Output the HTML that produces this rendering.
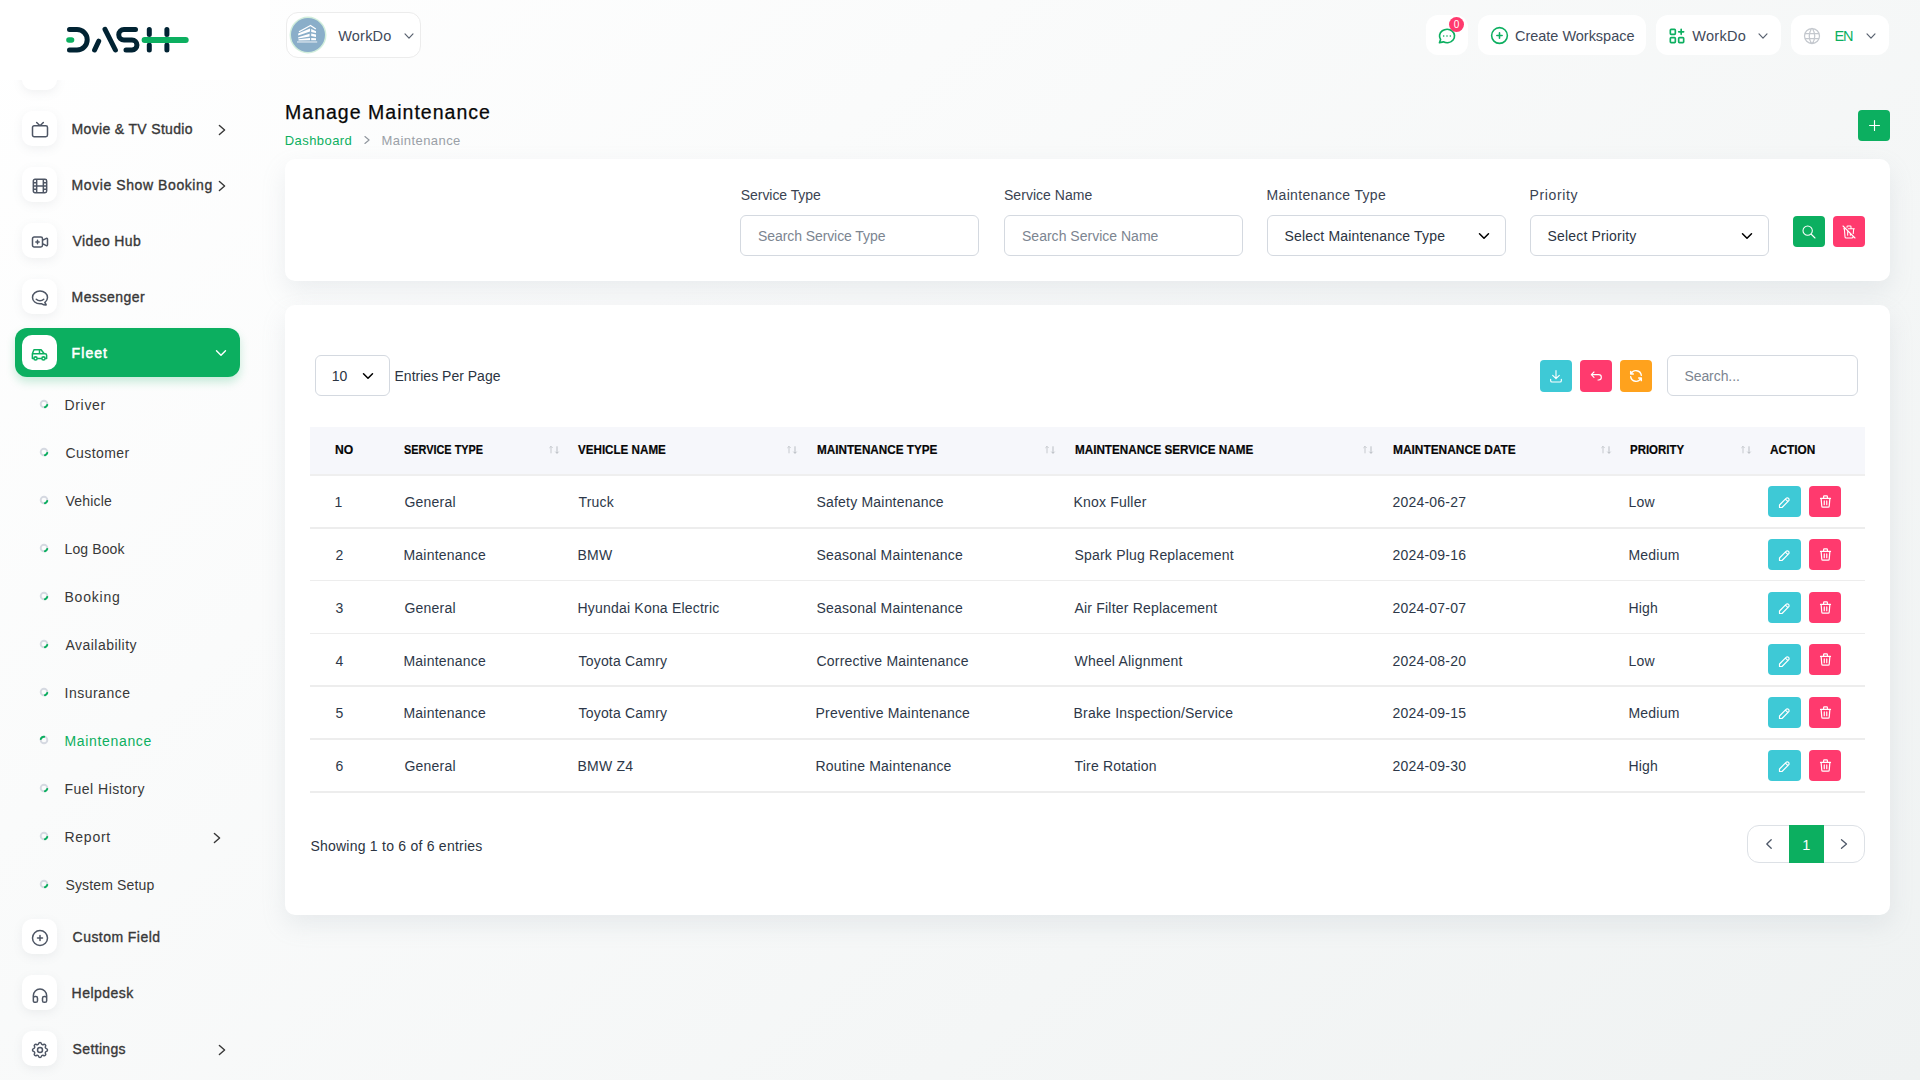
<!DOCTYPE html>
<html><head><meta charset="utf-8"><title>Manage Maintenance</title>
<style>
html,body{margin:0;padding:0;width:1920px;height:1080px;overflow:hidden}
body{position:relative;font-family:"Liberation Sans", sans-serif;background:linear-gradient(140deg,#ffffff 0%,#eff2f2 100%)}
.t{position:absolute;white-space:nowrap;line-height:1}
.b{position:absolute}
.ib{border-radius:10px;background:#fff;box-shadow:0 3px 10px rgba(120,130,140,0.10)}
</style></head><body>
<div class="b ib" style="left:22px;top:55.0px;width:35px;height:35px"></div>
<div class="b ib" style="left:22px;top:111.0px;width:35px;height:35px"></div>
<svg class="b" style="left:29.5px;top:120.3px" width="20" height="20" viewBox="0 0 24 24" fill="none" stroke="#4e5665" stroke-width="1.8" stroke-linecap="round" stroke-linejoin="round"><path d="M3 9a2 2 0 0 1 2 -2h14a2 2 0 0 1 2 2v9a2 2 0 0 1 -2 2h-14a2 2 0 0 1 -2 -2z M16 3l-4 4l-4 -4"/></svg>
<div class="t" style="left:71.60px;top:121.90px;font-size:14px;font-weight:400;color:#383838;letter-spacing:0.331px;-webkit-text-stroke:0.35px currentColor;">Movie &amp; TV Studio</div>
<svg class="b" style="left:213.8px;top:122.0px;" width="16" height="16" viewBox="0 0 16 16" fill="none"><path d="M5.4 3.4000000000000004 L10.6 8 L5.4 12.6" stroke="#383838" stroke-width="1.4" stroke-linecap="round" stroke-linejoin="round"/></svg>
<div class="b ib" style="left:22px;top:167.0px;width:35px;height:35px"></div>
<svg class="b" style="left:29.5px;top:176.3px" width="20" height="20" viewBox="0 0 24 24" fill="none" stroke="#4e5665" stroke-width="1.8" stroke-linecap="round" stroke-linejoin="round"><path d="M4 6a2 2 0 0 1 2 -2h12a2 2 0 0 1 2 2v12a2 2 0 0 1 -2 2h-12a2 2 0 0 1 -2 -2z M8 4l0 16 M16 4l0 16 M4 8l4 0 M4 16l4 0 M4 12l16 0 M16 8l4 0 M16 16l4 0"/></svg>
<div class="t" style="left:71.60px;top:177.90px;font-size:14px;font-weight:400;color:#383838;letter-spacing:0.579px;-webkit-text-stroke:0.35px currentColor;">Movie Show Booking</div>
<svg class="b" style="left:213.8px;top:178.0px;" width="16" height="16" viewBox="0 0 16 16" fill="none"><path d="M5.4 3.4000000000000004 L10.6 8 L5.4 12.6" stroke="#383838" stroke-width="1.4" stroke-linecap="round" stroke-linejoin="round"/></svg>
<div class="b ib" style="left:22px;top:223.0px;width:35px;height:35px"></div>
<svg class="b" style="left:29.5px;top:232.3px" width="20" height="20" viewBox="0 0 24 24" fill="none" stroke="#4e5665" stroke-width="1.8" stroke-linecap="round" stroke-linejoin="round"><path d="M15 10l4.553 -2.276a1 1 0 0 1 1.447 .894v6.764a1 1 0 0 1 -1.447 .894l-4.553 -2.276v-4z M3 8a2 2 0 0 1 2 -2h8a2 2 0 0 1 2 2v8a2 2 0 0 1 -2 2h-8a2 2 0 0 1 -2 -2z M7 12l4 0 M9 10l0 4"/></svg>
<div class="t" style="left:72.60px;top:233.90px;font-size:14px;font-weight:400;color:#383838;letter-spacing:0.383px;-webkit-text-stroke:0.35px currentColor;">Video Hub</div>
<div class="b ib" style="left:22px;top:279.0px;width:35px;height:35px"></div>
<svg class="b" style="left:29.5px;top:288.3px" width="20" height="20" viewBox="0 0 24 24" fill="none" stroke="#4e5665" stroke-width="1.8" stroke-linecap="round" stroke-linejoin="round"><path d="M17.802 17.292s.077 -.055 .2 -.149c1.843 -1.425 3 -3.49 3 -5.789c0 -4.286 -4.03 -7.764 -9 -7.764c-4.97 0 -9 3.478 -9 7.764c0 4.288 4.03 7.646 9 7.646c.424 0 1.12 -.028 2.088 -.084c1.262 .82 3.104 1.493 4.716 1.493c.499 0 .734 -.41 .414 -.828c-.486 -.596 -1.156 -1.551 -1.416 -2.29z M7.5 13.5c2.5 2.5 6.5 2.5 9 0"/></svg>
<div class="t" style="left:71.60px;top:289.90px;font-size:14px;font-weight:400;color:#383838;letter-spacing:0.463px;-webkit-text-stroke:0.35px currentColor;">Messenger</div>
<div class="b" style="left:15px;top:328px;width:225px;height:49px;border-radius:12px;background:#0CAF60;box-shadow:0 5px 10px rgba(12,175,96,0.22)"></div>
<div class="b" style="left:22px;top:335px;width:35px;height:35px;border-radius:10px;background:#fff"></div>
<svg class="b" style="left:30.2px;top:344.6px" width="19" height="19" viewBox="0 0 24 24" fill="none" stroke="#0CAF60" stroke-width="1.9" stroke-linecap="round" stroke-linejoin="round"><path d="M5 17a2 2 0 1 0 4 0a2 2 0 1 0 -4 0 M15 17a2 2 0 1 0 4 0a2 2 0 1 0 -4 0 M5 17h-2v-6l2 -5h9l4 5h1a2 2 0 0 1 2 2v4h-2m-4 0h-6m-6 -6h15m-6 0v-5"/></svg>
<div class="t" style="left:71.60px;top:345.90px;font-size:14px;font-weight:400;color:#fff;letter-spacing:1.066px;-webkit-text-stroke:0.55px currentColor;">Fleet</div>
<svg class="b" style="left:212.5px;top:345px;" width="16" height="16" viewBox="0 0 16 16" fill="none"><path d="M3.5 5.7 L8 10.3 L12.5 5.7" stroke="#fff" stroke-width="1.4" stroke-linecap="round" stroke-linejoin="round"/></svg>
<svg class="b" style="left:38.2px;top:398px;" width="12" height="12" viewBox="0 0 12 12" fill="none"><circle cx="6" cy="6" r="3.3" stroke="#d5d9e1" stroke-width="1.9"/><path d="M9.2 7 A3.3 3.3 0 0 1 7 9.2" stroke="#0CAF60" stroke-width="2.1" stroke-linecap="round"/></svg>
<div class="t" style="left:64.50px;top:397.95px;font-size:14px;font-weight:400;color:#383838;letter-spacing:0.666px;">Driver</div>
<svg class="b" style="left:38.2px;top:446px;" width="12" height="12" viewBox="0 0 12 12" fill="none"><circle cx="6" cy="6" r="3.3" stroke="#d5d9e1" stroke-width="1.9"/><path d="M9.2 7 A3.3 3.3 0 0 1 7 9.2" stroke="#0CAF60" stroke-width="2.1" stroke-linecap="round"/></svg>
<div class="t" style="left:65.50px;top:445.95px;font-size:14px;font-weight:400;color:#383838;letter-spacing:0.426px;">Customer</div>
<svg class="b" style="left:38.2px;top:494px;" width="12" height="12" viewBox="0 0 12 12" fill="none"><circle cx="6" cy="6" r="3.3" stroke="#d5d9e1" stroke-width="1.9"/><path d="M9.2 7 A3.3 3.3 0 0 1 7 9.2" stroke="#0CAF60" stroke-width="2.1" stroke-linecap="round"/></svg>
<div class="t" style="left:65.50px;top:493.95px;font-size:14px;font-weight:400;color:#383838;letter-spacing:0.190px;">Vehicle</div>
<svg class="b" style="left:38.2px;top:542px;" width="12" height="12" viewBox="0 0 12 12" fill="none"><circle cx="6" cy="6" r="3.3" stroke="#d5d9e1" stroke-width="1.9"/><path d="M9.2 7 A3.3 3.3 0 0 1 7 9.2" stroke="#0CAF60" stroke-width="2.1" stroke-linecap="round"/></svg>
<div class="t" style="left:64.50px;top:541.95px;font-size:14px;font-weight:400;color:#383838;letter-spacing:0.120px;">Log Book</div>
<svg class="b" style="left:38.2px;top:590px;" width="12" height="12" viewBox="0 0 12 12" fill="none"><circle cx="6" cy="6" r="3.3" stroke="#d5d9e1" stroke-width="1.9"/><path d="M9.2 7 A3.3 3.3 0 0 1 7 9.2" stroke="#0CAF60" stroke-width="2.1" stroke-linecap="round"/></svg>
<div class="t" style="left:64.50px;top:589.95px;font-size:14px;font-weight:400;color:#383838;letter-spacing:0.782px;">Booking</div>
<svg class="b" style="left:38.2px;top:638px;" width="12" height="12" viewBox="0 0 12 12" fill="none"><circle cx="6" cy="6" r="3.3" stroke="#d5d9e1" stroke-width="1.9"/><path d="M9.2 7 A3.3 3.3 0 0 1 7 9.2" stroke="#0CAF60" stroke-width="2.1" stroke-linecap="round"/></svg>
<div class="t" style="left:65.50px;top:637.95px;font-size:14px;font-weight:400;color:#383838;letter-spacing:0.465px;">Availability</div>
<svg class="b" style="left:38.2px;top:686px;" width="12" height="12" viewBox="0 0 12 12" fill="none"><circle cx="6" cy="6" r="3.3" stroke="#d5d9e1" stroke-width="1.9"/><path d="M9.2 7 A3.3 3.3 0 0 1 7 9.2" stroke="#0CAF60" stroke-width="2.1" stroke-linecap="round"/></svg>
<div class="t" style="left:64.50px;top:685.95px;font-size:14px;font-weight:400;color:#383838;letter-spacing:0.500px;">Insurance</div>
<svg class="b" style="left:38.2px;top:734px;" width="12" height="12" viewBox="0 0 12 12" fill="none"><circle cx="6" cy="6" r="3.3" stroke="#d5d9e1" stroke-width="1.9"/><path d="M6.2 2.7 A3.3 3.3 0 0 0 2.8 5" stroke="#0CAF60" stroke-width="2" stroke-linecap="round"/></svg>
<div class="t" style="left:64.50px;top:733.95px;font-size:14px;font-weight:400;color:#0CAF60;letter-spacing:0.662px;">Maintenance</div>
<svg class="b" style="left:38.2px;top:782px;" width="12" height="12" viewBox="0 0 12 12" fill="none"><circle cx="6" cy="6" r="3.3" stroke="#d5d9e1" stroke-width="1.9"/><path d="M9.2 7 A3.3 3.3 0 0 1 7 9.2" stroke="#0CAF60" stroke-width="2.1" stroke-linecap="round"/></svg>
<div class="t" style="left:64.50px;top:781.95px;font-size:14px;font-weight:400;color:#383838;letter-spacing:0.483px;">Fuel History</div>
<svg class="b" style="left:38.2px;top:830px;" width="12" height="12" viewBox="0 0 12 12" fill="none"><circle cx="6" cy="6" r="3.3" stroke="#d5d9e1" stroke-width="1.9"/><path d="M9.2 7 A3.3 3.3 0 0 1 7 9.2" stroke="#0CAF60" stroke-width="2.1" stroke-linecap="round"/></svg>
<div class="t" style="left:64.50px;top:829.95px;font-size:14px;font-weight:400;color:#383838;letter-spacing:0.734px;">Report</div>
<svg class="b" style="left:38.2px;top:878px;" width="12" height="12" viewBox="0 0 12 12" fill="none"><circle cx="6" cy="6" r="3.3" stroke="#d5d9e1" stroke-width="1.9"/><path d="M9.2 7 A3.3 3.3 0 0 1 7 9.2" stroke="#0CAF60" stroke-width="2.1" stroke-linecap="round"/></svg>
<div class="t" style="left:65.50px;top:877.95px;font-size:14px;font-weight:400;color:#383838;letter-spacing:0.140px;">System Setup</div>
<svg class="b" style="left:208.8px;top:829.5px;" width="16" height="16" viewBox="0 0 16 16" fill="none"><path d="M5.4 3.4000000000000004 L10.6 8 L5.4 12.6" stroke="#383838" stroke-width="1.4" stroke-linecap="round" stroke-linejoin="round"/></svg>
<div class="b ib" style="left:22px;top:919.0px;width:35px;height:35px"></div>
<svg class="b" style="left:29.5px;top:928.3px" width="20" height="20" viewBox="0 0 24 24" fill="none" stroke="#4e5665" stroke-width="1.8" stroke-linecap="round" stroke-linejoin="round"><path d="M3 12a9 9 0 1 0 18 0a9 9 0 0 0 -18 0 M9 12h6 M12 9v6"/></svg>
<div class="t" style="left:72.60px;top:929.90px;font-size:14px;font-weight:400;color:#383838;letter-spacing:0.447px;-webkit-text-stroke:0.35px currentColor;">Custom Field</div>
<div class="b ib" style="left:22px;top:975.0px;width:35px;height:35px"></div>
<svg class="b" style="left:29.5px;top:984.3px" width="20" height="20" viewBox="0 0 24 24" fill="none" stroke="#4e5665" stroke-width="1.8" stroke-linecap="round" stroke-linejoin="round"><path d="M4 17a2 2 0 0 1 2 -2h1a2 2 0 0 1 2 2v3a2 2 0 0 1 -2 2h-1a2 2 0 0 1 -2 -2z M15 17a2 2 0 0 1 2 -2h1a2 2 0 0 1 2 2v3a2 2 0 0 1 -2 2h-1a2 2 0 0 1 -2 -2z M4 17v-3a8 8 0 0 1 16 0v3"/></svg>
<div class="t" style="left:71.60px;top:985.90px;font-size:14px;font-weight:400;color:#383838;letter-spacing:0.484px;-webkit-text-stroke:0.35px currentColor;">Helpdesk</div>
<div class="b ib" style="left:22px;top:1031.0px;width:35px;height:35px"></div>
<svg class="b" style="left:29.5px;top:1040.3px" width="20" height="20" viewBox="0 0 24 24" fill="none" stroke="#4e5665" stroke-width="1.8" stroke-linecap="round" stroke-linejoin="round"><path d="M10.325 4.317c.426 -1.756 2.924 -1.756 3.35 0a1.724 1.724 0 0 0 2.573 1.066c1.543 -.94 3.31 .826 2.37 2.37a1.724 1.724 0 0 0 1.065 2.572c1.756 .426 1.756 2.924 0 3.35a1.724 1.724 0 0 0 -1.066 2.573c.94 1.543 -.826 3.31 -2.37 2.37a1.724 1.724 0 0 0 -2.572 1.065c-.426 1.756 -2.924 1.756 -3.35 0a1.724 1.724 0 0 0 -2.573 -1.066c-1.543 .94 -3.31 -.826 -2.37 -2.37a1.724 1.724 0 0 0 -1.065 -2.572c-1.756 -.426 -1.756 -2.924 0 -3.35a1.724 1.724 0 0 0 1.066 -2.573c-.94 -1.543 .826 -3.31 2.37 -2.37c1 .608 2.296 .07 2.572 -1.065z M9 12a3 3 0 1 0 6 0a3 3 0 0 0 -6 0"/></svg>
<div class="t" style="left:72.60px;top:1041.90px;font-size:14px;font-weight:400;color:#383838;letter-spacing:0.345px;-webkit-text-stroke:0.35px currentColor;">Settings</div>
<svg class="b" style="left:213.8px;top:1042.0px;" width="16" height="16" viewBox="0 0 16 16" fill="none"><path d="M5.4 3.4000000000000004 L10.6 8 L5.4 12.6" stroke="#383838" stroke-width="1.4" stroke-linecap="round" stroke-linejoin="round"/></svg>
<div class="b" style="left:0;top:0;width:270px;height:80px;background:#fff"></div>
<svg class="b" style="left:0px;top:0px;" width="200" height="70" viewBox="0 0 200 70" fill="none"><path d="M69.5 29.5 H77 A10.2 10.2 0 0 1 77 49.9 H69.5" stroke="#012333" stroke-width="5" stroke-linecap="round" fill="none"/><path d="M69 40 H71.5" stroke="#0CAF60" stroke-width="5.6" stroke-linecap="round"/><path d="M98.7 41.2 L94.6 50" stroke="#012333" stroke-width="5" stroke-linecap="round"/><path d="M105 29.3 L115.4 50" stroke="#012333" stroke-width="5" stroke-linecap="round"/><path d="M135.5 29.5 H124 A5.25 5.25 0 0 0 124 40 H132 A4.95 4.95 0 0 1 132 49.9 H126" stroke="#012333" stroke-width="5" stroke-linecap="round" stroke-linejoin="round" fill="none"/><path d="M149.3 29.5 V34.5 M149.3 45 V50 M166.9 29.5 V34.5 M166.9 45 V50" stroke="#012333" stroke-width="5" stroke-linecap="round"/><path d="M144.6 39.9 H185.7" stroke="#0CAF60" stroke-width="6" stroke-linecap="round"/></svg>
<div class="b" style="left:286px;top:12px;width:135px;height:46px;border:1px solid #ececec;border-radius:12px;background:#fff;box-sizing:border-box"></div>
<div class="b" style="left:291px;top:18px;width:34px;height:34px;border-radius:50%;background:#8aaec9;box-shadow:0 0 0 1.5px #d2eedc"></div>
<svg class="b" style="left:290px;top:17px;" width="34" height="34" viewBox="0 0 34 34" fill="none"><path d="M9 14.7 L20.5 8.5 L25.8 12" stroke="#fff" stroke-width="1.3" fill="none" stroke-linejoin="round"/><path d="M8.2 16.6 L20 11.6 L20 14.6 L8.2 18.6 Z M8.2 20.2 L19.6 16.8 L19.6 19.4 L8.2 21.6 Z M8.5 22.2 L20 20.9 L20 23.3 L8.5 23.6 Z M21.2 11.9 L26 14.2 L26 16.1 L21.2 14.9 Z M21.2 16.6 L26 17.6 L26 19.9 L21.2 19.1 Z M21.2 21 L26 21.2 L26 23.2 L21.2 23.3 Z" fill="#fff"/><rect x="7" y="24" width="20.2" height="1.9" fill="#fff" opacity="0.45"/></svg>
<div class="t" style="left:338.20px;top:28.63px;font-size:14.5px;font-weight:400;color:#3f4a5a;letter-spacing:0.212px;">WorkDo</div>
<svg class="b" style="left:401px;top:27.799999999999997px;" width="16" height="16" viewBox="0 0 16 16" fill="none"><path d="M4.0 5.9 L8 10.1 L12.0 5.9" stroke="#5a6270" stroke-width="1.2" stroke-linecap="round" stroke-linejoin="round"/></svg>
<div class="b" style="left:1426px;top:15px;width:42px;height:40px;border-radius:12px;background:#fff"></div>
<svg class="b" style="left:1436.6px;top:26.2px" width="20" height="20" viewBox="0 0 24 24" fill="none" stroke="#0CAF60" stroke-width="2" stroke-linecap="round" stroke-linejoin="round"><path d="M3 20l1.3 -3.9c-2.324 -3.437 -1.426 -7.872 2.1 -10.374c3.526 -2.501 8.59 -2.296 11.845 .48c3.255 2.777 3.695 7.266 1.029 10.501c-2.666 3.235 -7.615 4.215 -11.574 2.293l-4.7 1 M12 12l0 .01 M8 12l0 .01 M16 12l0 .01"/></svg>
<div class="b" style="left:1449px;top:17.3px;width:15px;height:15px;border-radius:50%;background:#FF3A6E"></div>
<div class="t" style="left:1453.70px;top:20.14px;font-size:10px;font-weight:400;color:#fff;letter-spacing:0.000px;">0</div>
<div class="b" style="left:1478px;top:15px;width:168px;height:40px;border-radius:12px;background:#fff"></div>
<svg class="b" style="left:1489px;top:25.4px" width="21" height="21" viewBox="0 0 24 24" fill="none" stroke="#0CAF60" stroke-width="1.8" stroke-linecap="round" stroke-linejoin="round"><path d="M3 12a9 9 0 1 0 18 0a9 9 0 0 0 -18 0 M9 12h6 M12 9v6"/></svg>
<div class="t" style="left:1515.00px;top:28.63px;font-size:14.5px;font-weight:400;color:#3f4a5a;letter-spacing:-0.023px;">Create Workspace</div>
<div class="b" style="left:1656px;top:15px;width:125px;height:40px;border-radius:12px;background:#fff"></div>
<svg class="b" style="left:1667.2px;top:25.8px" width="20" height="20" viewBox="0 0 24 24" fill="none" stroke="#0CAF60" stroke-width="2" stroke-linecap="round" stroke-linejoin="round"><path d="M4 5a1 1 0 0 1 1 -1h4a1 1 0 0 1 1 1v4a1 1 0 0 1 -1 1h-4a1 1 0 0 1 -1 -1z M4 15a1 1 0 0 1 1 -1h4a1 1 0 0 1 1 1v4a1 1 0 0 1 -1 1h-4a1 1 0 0 1 -1 -1z M14 15a1 1 0 0 1 1 -1h4a1 1 0 0 1 1 1v4a1 1 0 0 1 -1 1h-4a1 1 0 0 1 -1 -1z M14 7l6 0 M17 4l0 6"/></svg>
<div class="t" style="left:1692.30px;top:28.63px;font-size:14.5px;font-weight:400;color:#3f4a5a;letter-spacing:0.272px;">WorkDo</div>
<svg class="b" style="left:1755px;top:27.799999999999997px;" width="16" height="16" viewBox="0 0 16 16" fill="none"><path d="M4.0 5.9 L8 10.1 L12.0 5.9" stroke="#5a6270" stroke-width="1.2" stroke-linecap="round" stroke-linejoin="round"/></svg>
<div class="b" style="left:1791px;top:15px;width:98px;height:40px;border-radius:12px;background:#fff"></div>
<svg class="b" style="left:1801.5px;top:25.5px" width="20" height="20" viewBox="0 0 24 24" fill="none" stroke="#c4c8ce" stroke-width="1.5" stroke-linecap="round" stroke-linejoin="round"><path d="M3 12a9 9 0 1 0 18 0a9 9 0 0 0 -18 0 M3.6 9h16.8 M3.6 15h16.8 M11.5 3a17 17 0 0 0 0 18 M12.5 3a17 17 0 0 1 0 18"/></svg>
<div class="t" style="left:1834.50px;top:28.63px;font-size:14.5px;font-weight:400;color:#0CAF60;letter-spacing:-1.171px;">EN</div>
<svg class="b" style="left:1862.5px;top:27.799999999999997px;" width="16" height="16" viewBox="0 0 16 16" fill="none"><path d="M4.0 5.9 L8 10.1 L12.0 5.9" stroke="#5a6270" stroke-width="1.2" stroke-linecap="round" stroke-linejoin="round"/></svg>
<div class="t" style="left:285.00px;top:102.59px;font-size:19.5px;font-weight:400;color:#080808;letter-spacing:1.024px;-webkit-text-stroke:0.25px currentColor;">Manage Maintenance</div>
<div class="t" style="left:284.70px;top:133.80px;font-size:13px;font-weight:400;color:#0CAF60;letter-spacing:0.442px;">Dashboard</div>
<svg class="b" style="left:359.1px;top:132.3px;" width="16" height="16" viewBox="0 0 16 16" fill="none"><path d="M5.9 4.5 L10.1 8 L5.9 11.5" stroke="#8f959d" stroke-width="1.1" stroke-linecap="round" stroke-linejoin="round"/></svg>
<div class="t" style="left:381.60px;top:133.80px;font-size:13px;font-weight:400;color:#9aa0a7;letter-spacing:0.429px;">Maintenance</div>
<div class="b" style="left:1858px;top:110px;width:32px;height:31px;background:#0CAF60;border-radius:4px"></div>
<svg class="b" style="left:1865.5px;top:117px" width="17" height="17" viewBox="0 0 24 24" fill="none" stroke="#fff" stroke-width="1.6" stroke-linecap="round" stroke-linejoin="round"><path d="M12 5l0 14 M5 12l14 0"/></svg>
<div class="b" style="left:285px;top:159px;width:1605px;height:122px;background:#fff;border-radius:10px;box-shadow:0 10px 24px rgba(150,160,175,0.16)"></div>
<div class="t" style="left:740.80px;top:188.15px;font-size:14px;font-weight:400;color:#3a4352;letter-spacing:-0.058px;">Service Type</div>
<div class="b" style="left:740px;top:215px;width:239px;height:41px;border:1px solid #d4d9e0;border-radius:6px;background:#fff;box-sizing:border-box"></div>
<div class="t" style="left:758.00px;top:228.75px;font-size:14px;font-weight:400;color:#7c8591;letter-spacing:-0.083px;">Search Service Type</div>
<div class="t" style="left:1004.00px;top:188.15px;font-size:14px;font-weight:400;color:#3a4352;letter-spacing:0.034px;">Service Name</div>
<div class="b" style="left:1004px;top:215px;width:239px;height:41px;border:1px solid #d4d9e0;border-radius:6px;background:#fff;box-sizing:border-box"></div>
<div class="t" style="left:1022.00px;top:228.75px;font-size:14px;font-weight:400;color:#7c8591;letter-spacing:0.012px;">Search Service Name</div>
<div class="t" style="left:1266.50px;top:188.15px;font-size:14px;font-weight:400;color:#3a4352;letter-spacing:0.342px;">Maintenance Type</div>
<div class="b" style="left:1267px;top:215px;width:239px;height:41px;border:1px solid #d4d9e0;border-radius:6px;background:#fff;box-sizing:border-box"></div>
<div class="t" style="left:1284.50px;top:228.75px;font-size:14px;font-weight:400;color:#2b3442;letter-spacing:0.158px;">Select Maintenance Type</div>
<svg class="b" style="left:1475.7px;top:228px;" width="16" height="16" viewBox="0 0 16 16" fill="none"><path d="M3.5 5.7 L8 10.3 L12.5 5.7" stroke="#000" stroke-width="1.5" stroke-linecap="round" stroke-linejoin="round"/></svg>
<div class="t" style="left:1529.60px;top:188.15px;font-size:14px;font-weight:400;color:#3a4352;letter-spacing:0.634px;">Priority</div>
<div class="b" style="left:1530px;top:215px;width:239px;height:41px;border:1px solid #d4d9e0;border-radius:6px;background:#fff;box-sizing:border-box"></div>
<div class="t" style="left:1547.50px;top:228.75px;font-size:14px;font-weight:400;color:#2b3442;letter-spacing:0.171px;">Select Priority</div>
<svg class="b" style="left:1738.7px;top:228px;" width="16" height="16" viewBox="0 0 16 16" fill="none"><path d="M3.5 5.7 L8 10.3 L12.5 5.7" stroke="#000" stroke-width="1.5" stroke-linecap="round" stroke-linejoin="round"/></svg>
<div class="b" style="left:1793px;top:216px;width:32px;height:31px;background:#0CAF60;border-radius:4px"></div>
<svg class="b" style="left:1801px;top:223.5px" width="16" height="16" viewBox="0 0 24 24" fill="none" stroke="#fff" stroke-width="1.6" stroke-linecap="round" stroke-linejoin="round"><path d="M3 10a7 7 0 1 0 14 0a7 7 0 1 0 -14 0 M21 21l-6 -6"/></svg>
<div class="b" style="left:1833px;top:216px;width:32px;height:31px;background:#FF3A6E;border-radius:4px"></div>
<svg class="b" style="left:1841px;top:224px" width="16" height="16" viewBox="0 0 24 24" fill="none" stroke="#fff" stroke-width="1.6" stroke-linecap="round" stroke-linejoin="round"><path d="M3 3l18 18 M4 7h3m4 0h9 M10 11l0 6 M14 14l0 3 M5 7l1 12a2 2 0 0 0 2 2h8a2 2 0 0 0 2 -2l.077 -.923 M18.384 14.373l.616 -7.373 M9 5v-1a1 1 0 0 1 1 -1h4a1 1 0 0 1 1 1v3"/></svg>
<div class="b" style="left:285px;top:305px;width:1605px;height:610px;background:#fff;border-radius:10px;box-shadow:0 10px 24px rgba(150,160,175,0.16)"></div>
<div class="b" style="left:315px;top:355px;width:75px;height:41px;border:1px solid #d4d9e0;border-radius:6px;background:#fff;box-sizing:border-box"></div>
<div class="t" style="left:331.70px;top:368.95px;font-size:14px;font-weight:400;color:#2b3442;letter-spacing:0.114px;">10</div>
<svg class="b" style="left:359.9px;top:367.5px;" width="16" height="16" viewBox="0 0 16 16" fill="none"><path d="M3.5 5.7 L8 10.3 L12.5 5.7" stroke="#000" stroke-width="1.5" stroke-linecap="round" stroke-linejoin="round"/></svg>
<div class="t" style="left:394.50px;top:368.95px;font-size:14px;font-weight:400;color:#2b3442;letter-spacing:0.010px;">Entries Per Page</div>
<div class="b" style="left:1540px;top:360px;width:32px;height:32px;background:#3EC9D6;border-radius:4px"></div>
<svg class="b" style="left:1548px;top:368px" width="16" height="16" viewBox="0 0 24 24" fill="none" stroke="#fff" stroke-width="1.7" stroke-linecap="round" stroke-linejoin="round"><path d="M4 17v2a2 2 0 0 0 2 2h12a2 2 0 0 0 2 -2v-2 M7 11l5 5l5 -5 M12 4l0 12"/></svg>
<div class="b" style="left:1580px;top:360px;width:32px;height:32px;background:#FF3A6E;border-radius:4px"></div>
<svg class="b" style="left:1588px;top:368px" width="16" height="16" viewBox="0 0 24 24" fill="none" stroke="#fff" stroke-width="1.7" stroke-linecap="round" stroke-linejoin="round"><path d="M9 14l-4 -4l4 -4 M5 10h11a4 4 0 1 1 0 8h-1"/></svg>
<div class="b" style="left:1620px;top:360px;width:32px;height:32px;background:#FFA21D;border-radius:4px"></div>
<svg class="b" style="left:1627.8px;top:368px" width="16" height="16" viewBox="0 0 24 24" fill="none" stroke="#fff" stroke-width="2.1" stroke-linecap="round" stroke-linejoin="round"><path d="M20 11a8.1 8.1 0 0 0 -15.5 -2m-.5 -4v4h4 M4 13a8.1 8.1 0 0 0 15.5 2m.5 4v-4h-4"/></svg>
<div class="b" style="left:1667px;top:355px;width:191px;height:41px;border:1px solid #d4d9e0;border-radius:6px;background:#fff;box-sizing:border-box"></div>
<div class="t" style="left:1684.40px;top:368.95px;font-size:14px;font-weight:400;color:#7c8591;letter-spacing:-0.067px;">Search...</div>
<div class="b" style="left:310px;top:427px;width:1555px;height:47px;background:#f6f7fb"></div>
<div class="b" style="left:310px;top:474px;width:1555px;height:2px;background:#efefef"></div>
<div class="t" style="left:335.30px;top:444.32px;font-size:12.5px;font-weight:700;color:#060606;letter-spacing:0.000px;transform:scaleX(0.9723);transform-origin:0 0;-webkit-text-stroke:0.2px currentColor;">NO</div>
<div class="t" style="left:403.90px;top:444.32px;font-size:12.5px;font-weight:700;color:#060606;letter-spacing:0.000px;transform:scaleX(0.8714);transform-origin:0 0;-webkit-text-stroke:0.2px currentColor;">SERVICE TYPE</div>
<svg class="b" style="left:546.5px;top:444px;" width="14" height="12" viewBox="0 0 14 12" fill="none"><path d="M4 9.3 V2.3 M2.4 3.9 L4 2.3 L5.6 3.9" stroke="#c6c9ce" stroke-width="1" fill="none"/><path d="M10 2.3 V9.3 M8.4 7.7 L10 9.3 L11.6 7.7" stroke="#b9bdc3" stroke-width="1" fill="none"/></svg>
<div class="t" style="left:578.30px;top:444.32px;font-size:12.5px;font-weight:700;color:#060606;letter-spacing:0.000px;transform:scaleX(0.9297);transform-origin:0 0;-webkit-text-stroke:0.2px currentColor;">VEHICLE NAME</div>
<svg class="b" style="left:785.3px;top:444px;" width="14" height="12" viewBox="0 0 14 12" fill="none"><path d="M4 9.3 V2.3 M2.4 3.9 L4 2.3 L5.6 3.9" stroke="#c6c9ce" stroke-width="1" fill="none"/><path d="M10 2.3 V9.3 M8.4 7.7 L10 9.3 L11.6 7.7" stroke="#b9bdc3" stroke-width="1" fill="none"/></svg>
<div class="t" style="left:816.90px;top:444.32px;font-size:12.5px;font-weight:700;color:#060606;letter-spacing:0.000px;transform:scaleX(0.9372);transform-origin:0 0;-webkit-text-stroke:0.2px currentColor;">MAINTENANCE TYPE</div>
<svg class="b" style="left:1043px;top:444px;" width="14" height="12" viewBox="0 0 14 12" fill="none"><path d="M4 9.3 V2.3 M2.4 3.9 L4 2.3 L5.6 3.9" stroke="#c6c9ce" stroke-width="1" fill="none"/><path d="M10 2.3 V9.3 M8.4 7.7 L10 9.3 L11.6 7.7" stroke="#b9bdc3" stroke-width="1" fill="none"/></svg>
<div class="t" style="left:1074.60px;top:444.32px;font-size:12.5px;font-weight:700;color:#060606;letter-spacing:0.000px;transform:scaleX(0.9342);transform-origin:0 0;-webkit-text-stroke:0.2px currentColor;">MAINTENANCE SERVICE NAME</div>
<svg class="b" style="left:1361px;top:444px;" width="14" height="12" viewBox="0 0 14 12" fill="none"><path d="M4 9.3 V2.3 M2.4 3.9 L4 2.3 L5.6 3.9" stroke="#c6c9ce" stroke-width="1" fill="none"/><path d="M10 2.3 V9.3 M8.4 7.7 L10 9.3 L11.6 7.7" stroke="#b9bdc3" stroke-width="1" fill="none"/></svg>
<div class="t" style="left:1392.50px;top:444.32px;font-size:12.5px;font-weight:700;color:#060606;letter-spacing:0.000px;transform:scaleX(0.9518);transform-origin:0 0;-webkit-text-stroke:0.2px currentColor;">MAINTENANCE DATE</div>
<svg class="b" style="left:1598.5px;top:444px;" width="14" height="12" viewBox="0 0 14 12" fill="none"><path d="M4 9.3 V2.3 M2.4 3.9 L4 2.3 L5.6 3.9" stroke="#c6c9ce" stroke-width="1" fill="none"/><path d="M10 2.3 V9.3 M8.4 7.7 L10 9.3 L11.6 7.7" stroke="#b9bdc3" stroke-width="1" fill="none"/></svg>
<div class="t" style="left:1629.60px;top:444.32px;font-size:12.5px;font-weight:700;color:#060606;letter-spacing:0.000px;transform:scaleX(0.9163);transform-origin:0 0;-webkit-text-stroke:0.2px currentColor;">PRIORITY</div>
<svg class="b" style="left:1739.3px;top:444px;" width="14" height="12" viewBox="0 0 14 12" fill="none"><path d="M4 9.3 V2.3 M2.4 3.9 L4 2.3 L5.6 3.9" stroke="#c6c9ce" stroke-width="1" fill="none"/><path d="M10 2.3 V9.3 M8.4 7.7 L10 9.3 L11.6 7.7" stroke="#b9bdc3" stroke-width="1" fill="none"/></svg>
<div class="t" style="left:1770.00px;top:444.32px;font-size:12.5px;font-weight:700;color:#060606;letter-spacing:0.000px;transform:scaleX(0.9460);transform-origin:0 0;-webkit-text-stroke:0.2px currentColor;">ACTION</div>
<div class="t" style="left:334.50px;top:495.15px;font-size:14px;font-weight:400;color:#2d3849;letter-spacing:0.000px;letter-spacing:0.2px;">1</div>
<div class="t" style="left:404.50px;top:495.15px;font-size:14px;font-weight:400;color:#2d3849;letter-spacing:0.000px;letter-spacing:0.2px;">General</div>
<div class="t" style="left:578.50px;top:495.15px;font-size:14px;font-weight:400;color:#2d3849;letter-spacing:0.000px;letter-spacing:0.2px;">Truck</div>
<div class="t" style="left:816.50px;top:495.15px;font-size:14px;font-weight:400;color:#2d3849;letter-spacing:0.000px;letter-spacing:0.2px;">Safety Maintenance</div>
<div class="t" style="left:1073.50px;top:495.15px;font-size:14px;font-weight:400;color:#2d3849;letter-spacing:0.000px;letter-spacing:0.2px;">Knox Fuller</div>
<div class="t" style="left:1392.50px;top:495.15px;font-size:14px;font-weight:400;color:#2d3849;letter-spacing:0.000px;letter-spacing:0.2px;">2024-06-27</div>
<div class="t" style="left:1628.50px;top:495.15px;font-size:14px;font-weight:400;color:#2d3849;letter-spacing:0.000px;letter-spacing:0.2px;">Low</div>
<div class="b" style="left:1768px;top:486.0px;width:33px;height:31px;background:#3EC9D6;border-radius:4px"></div>
<svg class="b" style="left:1777px;top:495.2px" width="15" height="15" viewBox="0 0 24 24" fill="none" stroke="#fff" stroke-width="1.9" stroke-linecap="round" stroke-linejoin="round"><path d="M4 20h4l10.5 -10.5a2.828 2.828 0 1 0 -4 -4l-10.5 10.5v4 M13.5 6.5l4 4"/></svg>
<div class="b" style="left:1809px;top:486.0px;width:32px;height:31px;background:#FF3A6E;border-radius:4px"></div>
<svg class="b" style="left:1817.5px;top:494.0px" width="15" height="15" viewBox="0 0 24 24" fill="none" stroke="#fff" stroke-width="1.9" stroke-linecap="round" stroke-linejoin="round"><path d="M4 7l16 0 M10 11l0 6 M14 11l0 6 M5 7l1 12a2 2 0 0 0 2 2h8a2 2 0 0 0 2 -2l1 -12 M9 7v-3a1 1 0 0 1 1 -1h4a1 1 0 0 1 1 1v3"/></svg>
<div class="b" style="left:310px;top:527.0px;width:1555px;height:1.7px;background:#ededed"></div>
<div class="t" style="left:335.50px;top:547.95px;font-size:14px;font-weight:400;color:#2d3849;letter-spacing:0.000px;letter-spacing:0.2px;">2</div>
<div class="t" style="left:403.50px;top:547.95px;font-size:14px;font-weight:400;color:#2d3849;letter-spacing:0.000px;letter-spacing:0.2px;">Maintenance</div>
<div class="t" style="left:577.50px;top:547.95px;font-size:14px;font-weight:400;color:#2d3849;letter-spacing:0.000px;letter-spacing:0.2px;">BMW</div>
<div class="t" style="left:816.50px;top:547.95px;font-size:14px;font-weight:400;color:#2d3849;letter-spacing:0.000px;letter-spacing:0.2px;">Seasonal Maintenance</div>
<div class="t" style="left:1074.50px;top:547.95px;font-size:14px;font-weight:400;color:#2d3849;letter-spacing:0.000px;letter-spacing:0.2px;">Spark Plug Replacement</div>
<div class="t" style="left:1392.50px;top:547.95px;font-size:14px;font-weight:400;color:#2d3849;letter-spacing:0.000px;letter-spacing:0.2px;">2024-09-16</div>
<div class="t" style="left:1628.50px;top:547.95px;font-size:14px;font-weight:400;color:#2d3849;letter-spacing:0.000px;letter-spacing:0.2px;">Medium</div>
<div class="b" style="left:1768px;top:538.8px;width:33px;height:31px;background:#3EC9D6;border-radius:4px"></div>
<svg class="b" style="left:1777px;top:548.0px" width="15" height="15" viewBox="0 0 24 24" fill="none" stroke="#fff" stroke-width="1.9" stroke-linecap="round" stroke-linejoin="round"><path d="M4 20h4l10.5 -10.5a2.828 2.828 0 1 0 -4 -4l-10.5 10.5v4 M13.5 6.5l4 4"/></svg>
<div class="b" style="left:1809px;top:538.8px;width:32px;height:31px;background:#FF3A6E;border-radius:4px"></div>
<svg class="b" style="left:1817.5px;top:546.8px" width="15" height="15" viewBox="0 0 24 24" fill="none" stroke="#fff" stroke-width="1.9" stroke-linecap="round" stroke-linejoin="round"><path d="M4 7l16 0 M10 11l0 6 M14 11l0 6 M5 7l1 12a2 2 0 0 0 2 2h8a2 2 0 0 0 2 -2l1 -12 M9 7v-3a1 1 0 0 1 1 -1h4a1 1 0 0 1 1 1v3"/></svg>
<div class="b" style="left:310px;top:579.8px;width:1555px;height:1.7px;background:#ededed"></div>
<div class="t" style="left:335.50px;top:600.75px;font-size:14px;font-weight:400;color:#2d3849;letter-spacing:0.000px;letter-spacing:0.2px;">3</div>
<div class="t" style="left:404.50px;top:600.75px;font-size:14px;font-weight:400;color:#2d3849;letter-spacing:0.000px;letter-spacing:0.2px;">General</div>
<div class="t" style="left:577.50px;top:600.75px;font-size:14px;font-weight:400;color:#2d3849;letter-spacing:0.000px;letter-spacing:0.2px;">Hyundai Kona Electric</div>
<div class="t" style="left:816.50px;top:600.75px;font-size:14px;font-weight:400;color:#2d3849;letter-spacing:0.000px;letter-spacing:0.2px;">Seasonal Maintenance</div>
<div class="t" style="left:1074.50px;top:600.75px;font-size:14px;font-weight:400;color:#2d3849;letter-spacing:0.000px;letter-spacing:0.2px;">Air Filter Replacement</div>
<div class="t" style="left:1392.50px;top:600.75px;font-size:14px;font-weight:400;color:#2d3849;letter-spacing:0.000px;letter-spacing:0.2px;">2024-07-07</div>
<div class="t" style="left:1628.50px;top:600.75px;font-size:14px;font-weight:400;color:#2d3849;letter-spacing:0.000px;letter-spacing:0.2px;">High</div>
<div class="b" style="left:1768px;top:591.6px;width:33px;height:31px;background:#3EC9D6;border-radius:4px"></div>
<svg class="b" style="left:1777px;top:600.8000000000001px" width="15" height="15" viewBox="0 0 24 24" fill="none" stroke="#fff" stroke-width="1.9" stroke-linecap="round" stroke-linejoin="round"><path d="M4 20h4l10.5 -10.5a2.828 2.828 0 1 0 -4 -4l-10.5 10.5v4 M13.5 6.5l4 4"/></svg>
<div class="b" style="left:1809px;top:591.6px;width:32px;height:31px;background:#FF3A6E;border-radius:4px"></div>
<svg class="b" style="left:1817.5px;top:599.6px" width="15" height="15" viewBox="0 0 24 24" fill="none" stroke="#fff" stroke-width="1.9" stroke-linecap="round" stroke-linejoin="round"><path d="M4 7l16 0 M10 11l0 6 M14 11l0 6 M5 7l1 12a2 2 0 0 0 2 2h8a2 2 0 0 0 2 -2l1 -12 M9 7v-3a1 1 0 0 1 1 -1h4a1 1 0 0 1 1 1v3"/></svg>
<div class="b" style="left:310px;top:632.6px;width:1555px;height:1.7px;background:#ededed"></div>
<div class="t" style="left:335.50px;top:653.55px;font-size:14px;font-weight:400;color:#2d3849;letter-spacing:0.000px;letter-spacing:0.2px;">4</div>
<div class="t" style="left:403.50px;top:653.55px;font-size:14px;font-weight:400;color:#2d3849;letter-spacing:0.000px;letter-spacing:0.2px;">Maintenance</div>
<div class="t" style="left:578.50px;top:653.55px;font-size:14px;font-weight:400;color:#2d3849;letter-spacing:0.000px;letter-spacing:0.2px;">Toyota Camry</div>
<div class="t" style="left:816.50px;top:653.55px;font-size:14px;font-weight:400;color:#2d3849;letter-spacing:0.000px;letter-spacing:0.2px;">Corrective Maintenance</div>
<div class="t" style="left:1074.50px;top:653.55px;font-size:14px;font-weight:400;color:#2d3849;letter-spacing:0.000px;letter-spacing:0.2px;">Wheel Alignment</div>
<div class="t" style="left:1392.50px;top:653.55px;font-size:14px;font-weight:400;color:#2d3849;letter-spacing:0.000px;letter-spacing:0.2px;">2024-08-20</div>
<div class="t" style="left:1628.50px;top:653.55px;font-size:14px;font-weight:400;color:#2d3849;letter-spacing:0.000px;letter-spacing:0.2px;">Low</div>
<div class="b" style="left:1768px;top:644.4px;width:33px;height:31px;background:#3EC9D6;border-radius:4px"></div>
<svg class="b" style="left:1777px;top:653.6px" width="15" height="15" viewBox="0 0 24 24" fill="none" stroke="#fff" stroke-width="1.9" stroke-linecap="round" stroke-linejoin="round"><path d="M4 20h4l10.5 -10.5a2.828 2.828 0 1 0 -4 -4l-10.5 10.5v4 M13.5 6.5l4 4"/></svg>
<div class="b" style="left:1809px;top:644.4px;width:32px;height:31px;background:#FF3A6E;border-radius:4px"></div>
<svg class="b" style="left:1817.5px;top:652.4px" width="15" height="15" viewBox="0 0 24 24" fill="none" stroke="#fff" stroke-width="1.9" stroke-linecap="round" stroke-linejoin="round"><path d="M4 7l16 0 M10 11l0 6 M14 11l0 6 M5 7l1 12a2 2 0 0 0 2 2h8a2 2 0 0 0 2 -2l1 -12 M9 7v-3a1 1 0 0 1 1 -1h4a1 1 0 0 1 1 1v3"/></svg>
<div class="b" style="left:310px;top:685.4px;width:1555px;height:1.7px;background:#ededed"></div>
<div class="t" style="left:335.50px;top:706.35px;font-size:14px;font-weight:400;color:#2d3849;letter-spacing:0.000px;letter-spacing:0.2px;">5</div>
<div class="t" style="left:403.50px;top:706.35px;font-size:14px;font-weight:400;color:#2d3849;letter-spacing:0.000px;letter-spacing:0.2px;">Maintenance</div>
<div class="t" style="left:578.50px;top:706.35px;font-size:14px;font-weight:400;color:#2d3849;letter-spacing:0.000px;letter-spacing:0.2px;">Toyota Camry</div>
<div class="t" style="left:815.50px;top:706.35px;font-size:14px;font-weight:400;color:#2d3849;letter-spacing:0.000px;letter-spacing:0.2px;">Preventive Maintenance</div>
<div class="t" style="left:1073.50px;top:706.35px;font-size:14px;font-weight:400;color:#2d3849;letter-spacing:0.000px;letter-spacing:0.2px;">Brake Inspection/Service</div>
<div class="t" style="left:1392.50px;top:706.35px;font-size:14px;font-weight:400;color:#2d3849;letter-spacing:0.000px;letter-spacing:0.2px;">2024-09-15</div>
<div class="t" style="left:1628.50px;top:706.35px;font-size:14px;font-weight:400;color:#2d3849;letter-spacing:0.000px;letter-spacing:0.2px;">Medium</div>
<div class="b" style="left:1768px;top:697.2px;width:33px;height:31px;background:#3EC9D6;border-radius:4px"></div>
<svg class="b" style="left:1777px;top:706.4000000000001px" width="15" height="15" viewBox="0 0 24 24" fill="none" stroke="#fff" stroke-width="1.9" stroke-linecap="round" stroke-linejoin="round"><path d="M4 20h4l10.5 -10.5a2.828 2.828 0 1 0 -4 -4l-10.5 10.5v4 M13.5 6.5l4 4"/></svg>
<div class="b" style="left:1809px;top:697.2px;width:32px;height:31px;background:#FF3A6E;border-radius:4px"></div>
<svg class="b" style="left:1817.5px;top:705.2px" width="15" height="15" viewBox="0 0 24 24" fill="none" stroke="#fff" stroke-width="1.9" stroke-linecap="round" stroke-linejoin="round"><path d="M4 7l16 0 M10 11l0 6 M14 11l0 6 M5 7l1 12a2 2 0 0 0 2 2h8a2 2 0 0 0 2 -2l1 -12 M9 7v-3a1 1 0 0 1 1 -1h4a1 1 0 0 1 1 1v3"/></svg>
<div class="b" style="left:310px;top:738.2px;width:1555px;height:1.7px;background:#ededed"></div>
<div class="t" style="left:335.50px;top:759.15px;font-size:14px;font-weight:400;color:#2d3849;letter-spacing:0.000px;letter-spacing:0.2px;">6</div>
<div class="t" style="left:404.50px;top:759.15px;font-size:14px;font-weight:400;color:#2d3849;letter-spacing:0.000px;letter-spacing:0.2px;">General</div>
<div class="t" style="left:577.50px;top:759.15px;font-size:14px;font-weight:400;color:#2d3849;letter-spacing:0.000px;letter-spacing:0.2px;">BMW Z4</div>
<div class="t" style="left:815.50px;top:759.15px;font-size:14px;font-weight:400;color:#2d3849;letter-spacing:0.000px;letter-spacing:0.2px;">Routine Maintenance</div>
<div class="t" style="left:1074.50px;top:759.15px;font-size:14px;font-weight:400;color:#2d3849;letter-spacing:0.000px;letter-spacing:0.2px;">Tire Rotation</div>
<div class="t" style="left:1392.50px;top:759.15px;font-size:14px;font-weight:400;color:#2d3849;letter-spacing:0.000px;letter-spacing:0.2px;">2024-09-30</div>
<div class="t" style="left:1628.50px;top:759.15px;font-size:14px;font-weight:400;color:#2d3849;letter-spacing:0.000px;letter-spacing:0.2px;">High</div>
<div class="b" style="left:1768px;top:750.0px;width:33px;height:31px;background:#3EC9D6;border-radius:4px"></div>
<svg class="b" style="left:1777px;top:759.2px" width="15" height="15" viewBox="0 0 24 24" fill="none" stroke="#fff" stroke-width="1.9" stroke-linecap="round" stroke-linejoin="round"><path d="M4 20h4l10.5 -10.5a2.828 2.828 0 1 0 -4 -4l-10.5 10.5v4 M13.5 6.5l4 4"/></svg>
<div class="b" style="left:1809px;top:750.0px;width:32px;height:31px;background:#FF3A6E;border-radius:4px"></div>
<svg class="b" style="left:1817.5px;top:758.0px" width="15" height="15" viewBox="0 0 24 24" fill="none" stroke="#fff" stroke-width="1.9" stroke-linecap="round" stroke-linejoin="round"><path d="M4 7l16 0 M10 11l0 6 M14 11l0 6 M5 7l1 12a2 2 0 0 0 2 2h8a2 2 0 0 0 2 -2l1 -12 M9 7v-3a1 1 0 0 1 1 -1h4a1 1 0 0 1 1 1v3"/></svg>
<div class="b" style="left:310px;top:791.0px;width:1555px;height:1.7px;background:#ededed"></div>
<div class="t" style="left:310.40px;top:838.95px;font-size:14px;font-weight:400;color:#2b3442;letter-spacing:0.236px;">Showing 1 to 6 of 6 entries</div>
<div class="b" style="left:1747px;top:825px;width:118px;height:38px;border:1px solid #dde1e6;border-radius:12px;background:#fff;box-sizing:border-box;overflow:hidden"></div>
<div class="b" style="left:1789px;top:825px;width:35px;height:38px;background:#0CAF60"></div>
<div class="t" style="left:1802.20px;top:837.73px;font-size:14.5px;font-weight:400;color:#fff;letter-spacing:0.000px;">1</div>
<svg class="b" style="left:1760.5px;top:835.5px;" width="16" height="16" viewBox="0 0 16 16" fill="none"><rect width="16" height="16" fill="#fff"/><path d="M10.2 3.75 L5.8 8 L10.2 12.25" stroke="#4e5868" stroke-width="1.3" stroke-linecap="round" stroke-linejoin="round"/></svg>
<svg class="b" style="left:1836px;top:835.5px;" width="16" height="16" viewBox="0 0 16 16" fill="none"><path d="M5.5 3.75 L10.5 8 L5.5 12.25" stroke="#4e5868" stroke-width="1.3" stroke-linecap="round" stroke-linejoin="round"/></svg>
</body></html>
